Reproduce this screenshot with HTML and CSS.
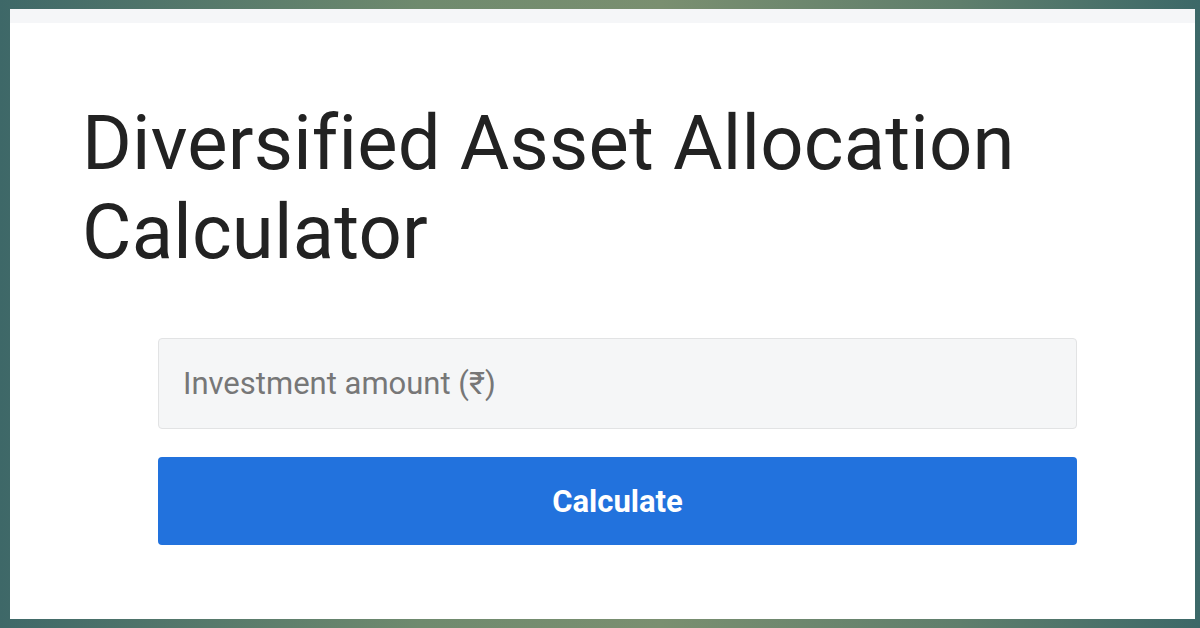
FILE: index.html
```html
<!DOCTYPE html>
<html lang="en">
<head>
    <meta charset="UTF-8">
    <title>Diversified Asset Allocation Calculator</title>
    <link rel="stylesheet" href="styles.css">
</head>
<body>
    <div class="frame">
        <div class="topbar"></div>
        <h1>Diversified Asset Allocation Calculator</h1>

        <div class="form">
            <input type="number" id="amount" placeholder="Investment amount (₹)">
            <button onclick="calculate()">Calculate</button>
        </div>
    </div>

    <script>
        function calculate() {
            const amount = parseFloat(document.getElementById('amount').value) || 0;
            console.log('Amount:', amount);
        }
    </script>
</body>
</html>
```

FILE: styles.css
```css
html, body {
    height: 100%;
}

body {
    font-family: Roboto, 'Noto Sans', 'DejaVu Sans', sans-serif;
    background: linear-gradient(90deg, #3e6868 0%, #6f8a6e 35%, #7a8f70 55%, #5f7e6c 80%, #3c6868 100%);
    margin: 0;
    padding: 9px 5px 9px 10px;
    box-sizing: border-box;
}

.frame {
    background-color: #fff;
    height: 100%;
    box-sizing: border-box;
    display: flex;
    flex-direction: column;
}

.topbar {
    height: 14px;
    background-color: #f5f6f8;
}

h1 {
    margin: 76px 0 0 72px;
    font-size: 76px;
    font-weight: 400;
    line-height: 89px;
    color: #222;
    letter-spacing: 0.2px;
}

.form {
    margin: 61px 0 0 148px;
    width: 919px;
    display: flex;
    flex-direction: column;
    gap: 28px;
}

input {
    height: 91px;
    box-sizing: border-box;
    padding: 0 24px;
    font-family: inherit;
    font-size: 31px;
    color: #333;
    background-color: #f5f6f7;
    border: 1px solid #e2e3e4;
    border-radius: 4px;
    outline: none;
}

input::placeholder {
    color: #777;
}

button {
    height: 88px;
    font-family: inherit;
    font-size: 31px;
    font-weight: 700;
    color: #fff;
    background-color: #2272dd;
    border: none;
    border-radius: 4px;
    cursor: pointer;
}

button:hover {
    background-color: #1a62c4;
}
```
